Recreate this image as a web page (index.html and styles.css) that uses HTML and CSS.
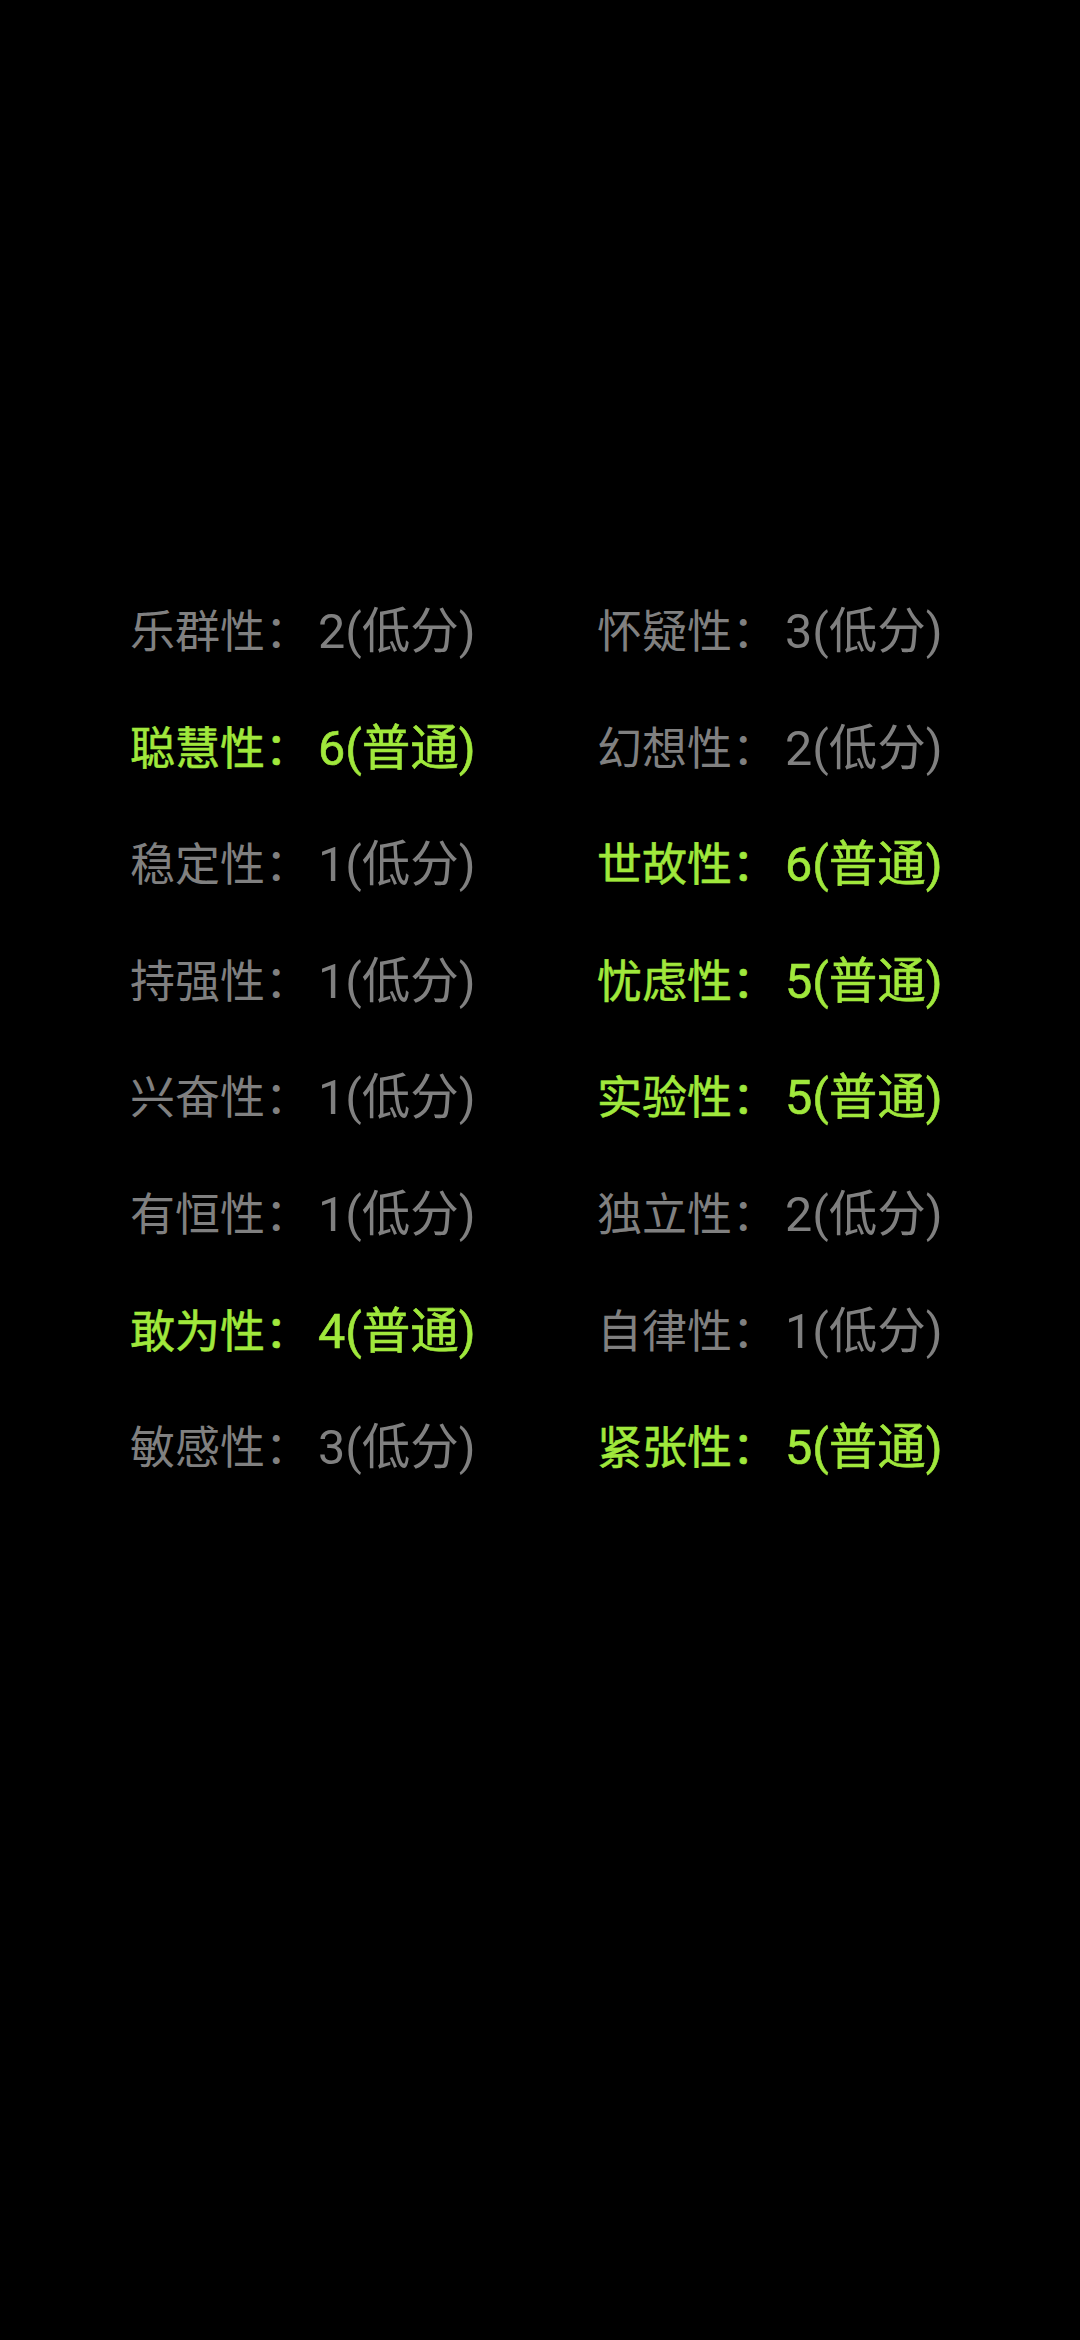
FILE: index.html
```html
<!DOCTYPE html>
<html lang="zh-CN">
<head>
<meta charset="utf-8">
<link rel="stylesheet" href="styles.css">
</head>
<body>
<div class="grid">
  <div class="item low">乐群性：<span class="val">2(低分)</span></div>
  <div class="item low">怀疑性：<span class="val">3(低分)</span></div>
  <div class="item mid">聪慧性：<span class="val">6(普通)</span></div>
  <div class="item low">幻想性：<span class="val">2(低分)</span></div>
  <div class="item low">稳定性：<span class="val">1(低分)</span></div>
  <div class="item mid">世故性：<span class="val">6(普通)</span></div>
  <div class="item low">持强性：<span class="val">1(低分)</span></div>
  <div class="item mid">忧虑性：<span class="val">5(普通)</span></div>
  <div class="item low">兴奋性：<span class="val">1(低分)</span></div>
  <div class="item mid">实验性：<span class="val">5(普通)</span></div>
  <div class="item low">有恒性：<span class="val">1(低分)</span></div>
  <div class="item low">独立性：<span class="val">2(低分)</span></div>
  <div class="item mid">敢为性：<span class="val">4(普通)</span></div>
  <div class="item low">自律性：<span class="val">1(低分)</span></div>
  <div class="item low">敏感性：<span class="val">3(低分)</span></div>
  <div class="item mid">紧张性：<span class="val">5(普通)</span></div>
</div>
</body>
</html>
```
FILE: styles.css
```css
html, body {
  margin: 0;
  padding: 0;
  background: #000;
}
body {
  width: 1080px;
  height: 2340px;
  font-family: Roboto, "Noto Sans CJK SC", sans-serif;
}
.grid {
  display: grid;
  grid-template-columns: 467px 1fr;
  grid-auto-rows: 116.6px;
  padding: 574px 0 0 130px;
}
.item {
  font-size: 45px;
  line-height: 116.6px;
  white-space: nowrap;
}
.val {
  font-size: 48.5px;
  margin-left: 8px;
}
.low {
  color: #808080;
}
.mid {
  color: #a0e83c;
  -webkit-text-stroke: 0.6px #a0e83c;
}
```
